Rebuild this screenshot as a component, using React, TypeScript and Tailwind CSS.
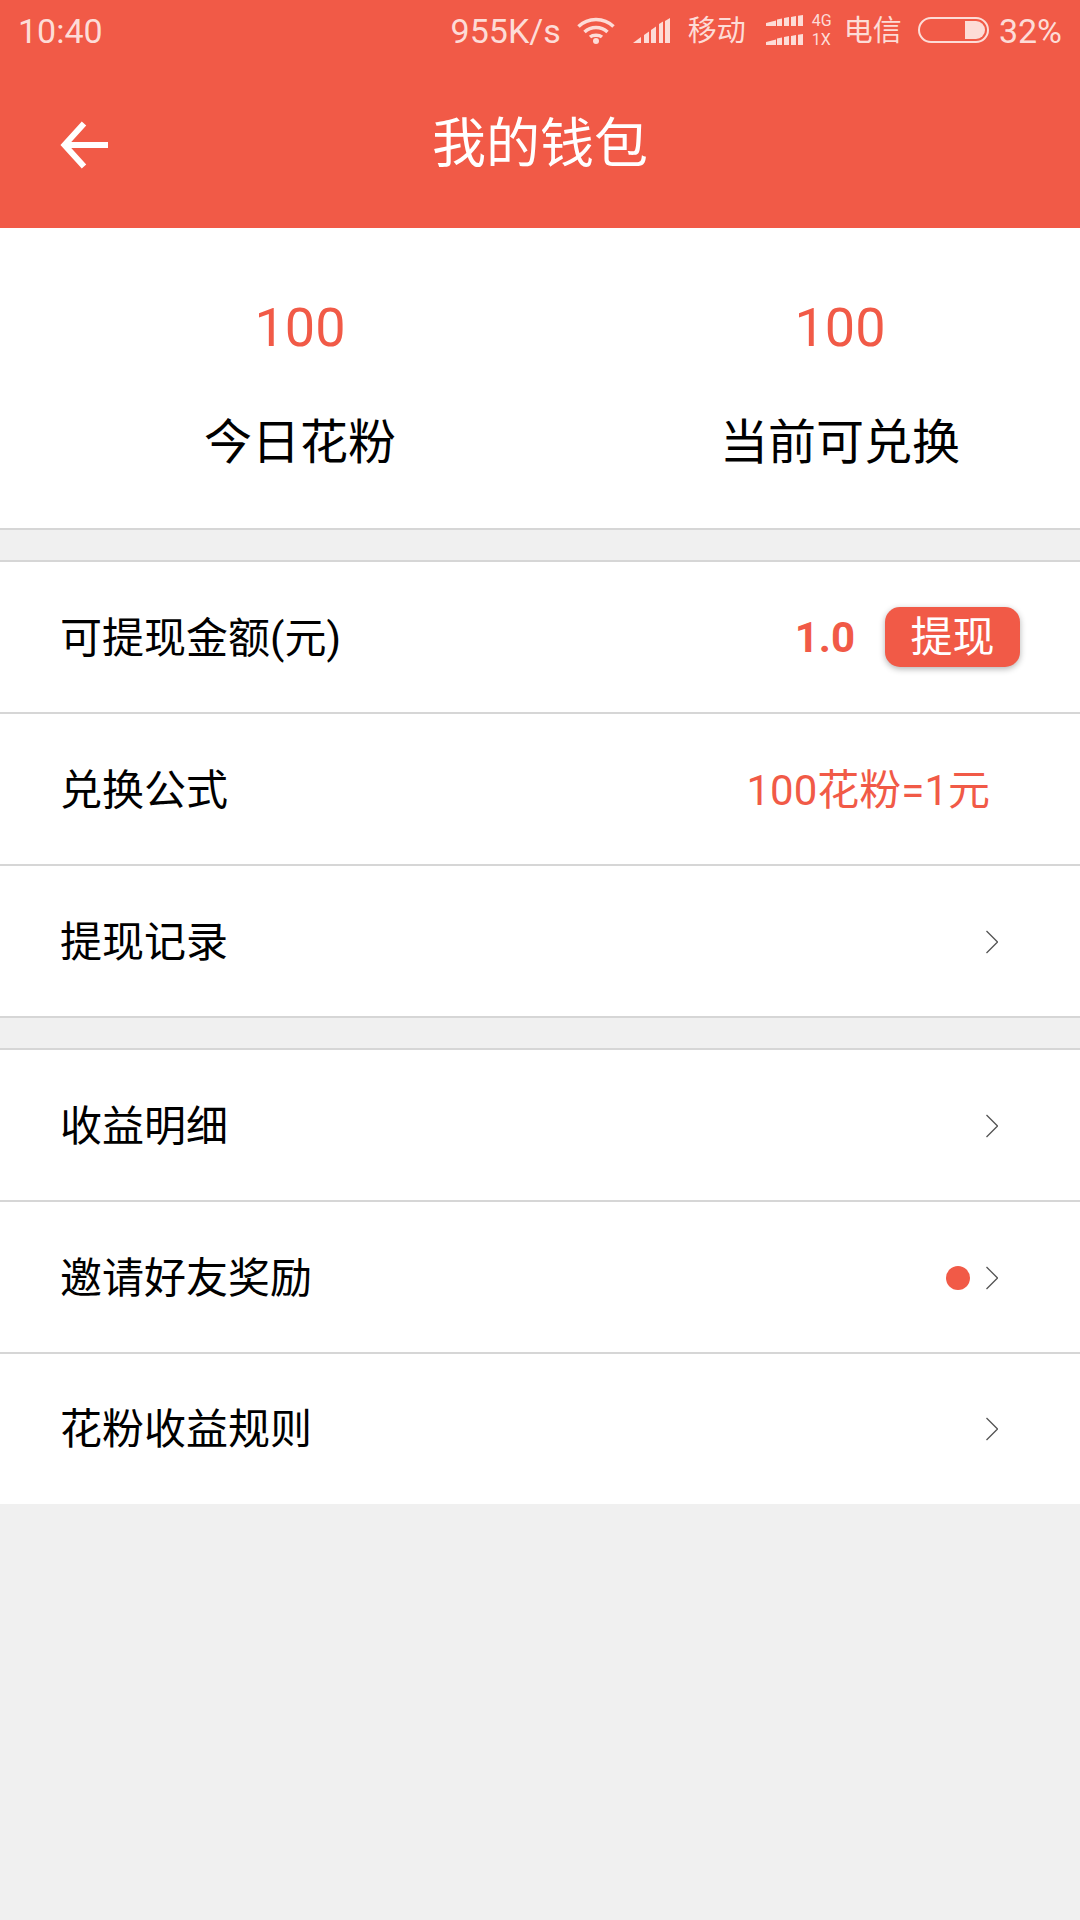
import type { ReactNode } from "react";

const Chevron = () => (
  <svg width="12" height="24" viewBox="0 0 12 24" fill="none" className="shrink-0">
    <path d="M0.500 1L11.500 12L0.500 23" stroke="#555555" strokeWidth="1.3" />
  </svg>
);

const Wifi = () => (
  <svg width="38" height="27" viewBox="0 0 38 27" fill="none" stroke="#fddcd7" strokeWidth="3.500" className="shrink-0">
    <path d="M1.500 9.500C11 0 27 0 36.500 9.500" />
    <path d="M7.500 15C14 9 24 9 30.500 15" />
    <path d="M13 20C16 17.500 22 17.500 25 20" />
    <circle cx="19" cy="24" r="3" fill="#fddcd7" stroke="none" />
  </svg>
);

const BigSignal = () => (
  <svg width="37" height="25" viewBox="0 0 37 25" fill="#fddcd7" className="shrink-0">
    <path d="M0 25L8 19V25Z" />
    <path d="M11 17L16 13.500V25H11Z" />
    <path d="M18 12L23 8.500V25H18Z" />
    <path d="M26 6L30 3.500V25H26Z" />
    <path d="M32 3L37 0V25H32Z" />
  </svg>
);

const SmallSignal = () => (
  <svg width="37" height="11" viewBox="0 0 37 11" fill="#fddcd7">
    <path d="M0 11V8L10 5.500V11Z" />
    <path d="M11 4.500L16 3.500V11H11Z" />
    <path d="M18 3L23 2V11H18Z" />
    <path d="M25 2L30 1V11H25Z" />
    <path d="M32 0.800L37 0V11H32Z" />
  </svg>
);

const Battery = () => (
  <div className="w-[71px] h-[26px] rounded-full border-2 border-[#fddcd7] relative overflow-hidden shrink-0">
    <div className="absolute right-[2px] top-[2px] bottom-[2px] w-[20px] rounded-r-full bg-[#fddcd7]" />
  </div>
);

const StatusBar = () => (
  <div className="h-[60px] flex items-center justify-between px-[18px] text-[#fddcd7] text-[34px]">
    <span className="pt-[3px]">10:40</span>
    <div className="flex items-center">
      <span className="pt-[3px] mr-[16px]">955K/s</span>
      <div className="mr-[18px]"><Wifi /></div>
      <div className="mr-[18px]"><BigSignal /></div>
      <span className="text-[29px] pt-[4px] mr-[20px]">移动</span>
      <div className="flex flex-col gap-[8px] mr-[9px]">
        <SmallSignal />
        <SmallSignal />
      </div>
      <div className="flex flex-col text-[16px] leading-[19px] w-[22px] mr-[10px]">
        <span>4G</span>
        <span>1X</span>
      </div>
      <span className="text-[29px] pt-[4px] mr-[16px]">电信</span>
      <Battery />
      <span className="pt-[3px] ml-[10px]">32%</span>
    </div>
  </div>
);

const Row = ({ label, children, last }: { label: string; children?: ReactNode; last?: boolean }) => (
  <div
    className={`bg-white flex items-center justify-between pl-[60px] text-[42px] text-black ${
      last ? "h-[150px]" : "h-[152px] pt-[2px] border-b-2 border-[#d6d6d6]"
    }`}
  >
    <span>{label}</span>
    {children}
  </div>
);

const Group = ({ children }: { children: ReactNode }) => (
  <div className="mt-[30px] border-t-2 border-[#d6d6d6]">{children}</div>
);

export default function App() {
  return (
    <div
      className="w-[1080px] h-[1920px] bg-[#f0f0f0] overflow-hidden"
      style={{ fontFamily: '"Roboto", "Noto Sans CJK SC", sans-serif' }}
    >
      <div className="h-[228px] bg-[#f15a47]">
        <StatusBar />
        <div className="h-[168px] flex items-center justify-center relative">
          <svg
            width="48"
            height="48"
            viewBox="0 0 48 48"
            fill="none"
            className="absolute left-[60px] top-[61px]"
            stroke="white"
            strokeWidth="6"
          >
            <path d="M24 2.500L4.500 24L24 45.500" />
            <path d="M4 24H48" />
          </svg>
          <span className="text-white text-[54px]">我的钱包</span>
        </div>
      </div>

      <div className="h-[302px] bg-white border-b-2 border-[#d6d6d6] grid grid-cols-[600px_480px] pt-[65px]">
        <div className="flex flex-col items-center">
          <span className="text-[#f15a47] text-[54px] leading-[70px]">100</span>
          <span className="text-black text-[48px] leading-[66px] mt-[47px]">今日花粉</span>
        </div>
        <div className="flex flex-col items-center">
          <span className="text-[#f15a47] text-[54px] leading-[70px]">100</span>
          <span className="text-black text-[48px] leading-[66px] mt-[47px]">当前可兑换</span>
        </div>
      </div>

      <Group>
        <Row label="可提现金额(元)">
          <div className="flex items-center pr-[60px] -mt-[2px]">
            <span className="text-[#f15a47] font-bold text-[42px] mr-[30px]">1.0</span>
            <div className="w-[135px] h-[60px] rounded-[15px] bg-[#f15a47] text-white text-[42px] flex items-center justify-center shadow-[0_2px_6px_rgba(0,0,0,0.3)]">
              提现
            </div>
          </div>
        </Row>
        <Row label="兑换公式">
          <span className="text-[#f15a47] text-[42px] pr-[90px]">100花粉=1元</span>
        </Row>
        <Row label="提现记录">
          <div className="pr-[82px]"><Chevron /></div>
        </Row>
      </Group>

      <Group>
        <Row label="收益明细">
          <div className="pr-[82px]"><Chevron /></div>
        </Row>
        <Row label="邀请好友奖励">
          <div className="flex items-center pr-[82px]">
            <div className="w-[24px] h-[24px] rounded-full bg-[#f15a47] mr-[16px]" />
            <Chevron />
          </div>
        </Row>
        <Row label="花粉收益规则" last>
          <div className="pr-[82px]"><Chevron /></div>
        </Row>
      </Group>
    </div>
  );
}
